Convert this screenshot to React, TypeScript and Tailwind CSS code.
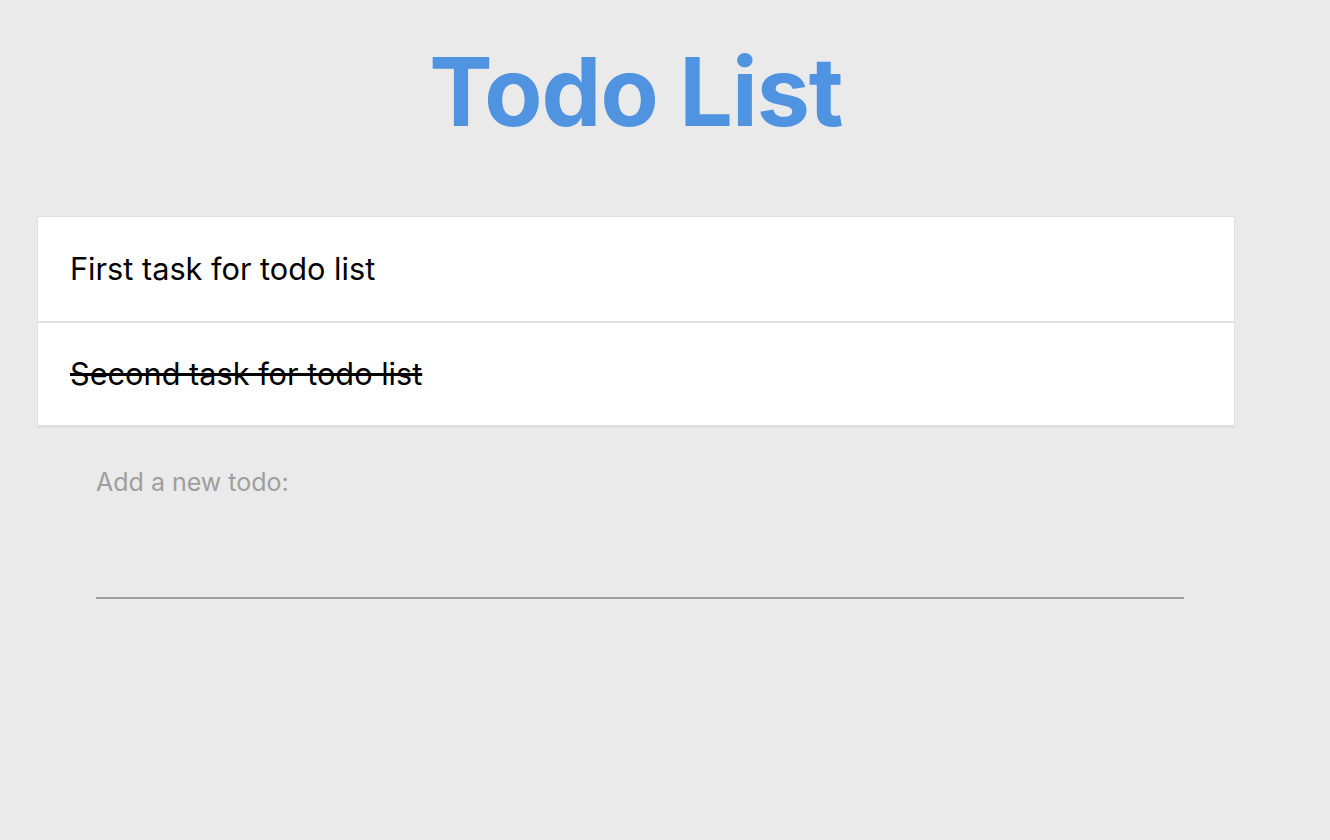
const todos = [
  { id: 1, text: 'First task for todo list', done: false },
  { id: 2, text: 'Second task for todo list', done: true },
]

export default function App() {
  return (
    <div className="min-h-screen bg-[#eaeaea]" style={{ fontFamily: 'Inter, "Noto Sans", sans-serif' }}>
      <div className="ml-[37px] w-[1198px] pt-[36px]">
        <h1 className="text-center text-[95px] leading-[112px] font-bold tracking-[-1px] text-[#4f93e1]">Todo List</h1>

        <ul className="mt-[68px] bg-white border border-[#e0e0e0] border-b-[3px]">
          {todos.map((todo, i) => (
            <li
              key={todo.id}
              className={`h-[104px] flex items-center px-[32px] text-[30.7px] text-black ${i > 0 ? 'border-t-[2px] border-[#e0e0e0]' : ''} ${todo.done ? 'line-through' : ''}`}
            >
              {todo.text}
            </li>
          ))}
        </ul>

        <div className="ml-[59px] mr-[51px] mt-[38px]">
          <label className="block text-[25px] leading-[32px] text-[#9e9e9e]">Add a new todo:</label>
          <input className="mt-[61px] w-full h-[40px] bg-transparent outline-none border-b-[2px] border-[#9e9e9e] text-[22px]" />
        </div>
      </div>
    </div>
  )
}
